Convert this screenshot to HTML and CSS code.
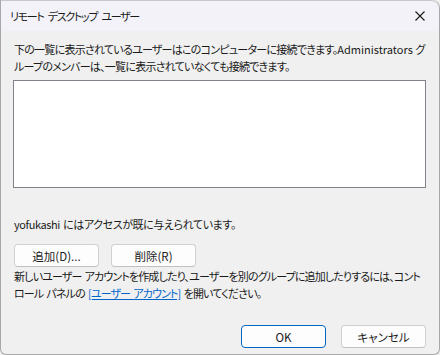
FILE: index.html
```html
<!DOCTYPE html>
<html lang="ja">
<head>
    <meta charset="UTF-8">
    <title>リモート デスクトップ ユーザー</title>
    <link rel="stylesheet" href="styles.css">
</head>
<body>
    <div class="window">
        <div class="titlebar">
            <span class="title">リモート デスクトップ ユーザー</span>
            <span class="close">
                <svg width="10" height="10" viewBox="0 0 10 10"><path d="M0.5 0.5 L9.5 9.5 M9.5 0.5 L0.5 9.5" stroke="#1a1a1a" stroke-width="1.1"/></svg>
            </span>
        </div>
        <div class="content">
            <p class="desc">下の一覧に表示されているユーザーはこのコンピューターに接続できます。<span class="latin">Administrators</span> グ<br>ループのメンバーは、一覧に表示されていなくても接続できます。</p>
            <div class="listbox"></div>
            <p class="status">yofukashi にはアクセスが既に与えられています。</p>
            <div class="row-buttons">
                <button class="btn">追加(D)...</button>
                <button class="btn">削除(R)</button>
            </div>
            <p class="hint">新しいユーザー アカウントを作成したり、ユーザーを別のグループに追加したりするには、コント<br>ロール パネルの <a href="#" class="link">[ユーザー アカウント]</a> を開いてください。</p>
        </div>
        <div class="footer">
            <button class="btn primary">OK</button>
            <button class="btn">キャンセル</button>
        </div>
    </div>
</body>
</html>
```

FILE: styles.css
```css
* {
    margin: 0;
    padding: 0;
    box-sizing: border-box;
}

body {
    font-family: "Noto Sans CJK JP", "Noto Sans", sans-serif;
    font-size: 11px;
    color: #1a1a1a;
    background: #f0f0f0;
    width: 440px;
    height: 355px;
    overflow: hidden;
}

.window {
    width: 440px;
    height: 355px;
    background: #f0f0f0;
    border: 1px solid #a8a8a8;
    border-top: none;
    border-radius: 0 8px 6px 6px;
    overflow: hidden;
}

.titlebar {
    height: 31px;
    background: #f2f2f8;
    display: flex;
    align-items: center;
    justify-content: space-between;
    padding: 0 8px 0 9px;
    border-top: 1px solid #c8c8cc;
    border-top-right-radius: 8px;
}

.title {
    font-size: 11px;
    font-feature-settings: "palt";
    letter-spacing: -1.3px;
    word-spacing: 3px;
    color: #1a1a1a;
}

.close {
    width: 22px;
    display: flex;
    justify-content: center;
}

.content {
    padding: 10px 13px 0 12px;
}

.desc,
.status,
.hint {
    line-height: 17px;
    font-feature-settings: "palt";
    white-space: nowrap;
    padding-left: 1px;
    word-spacing: 1px;
}

.desc {
    letter-spacing: -0.75px;
}

.latin {
    letter-spacing: 0;
}

.listbox {
    margin-top: 5px;
    height: 108px;
    background: #fff;
    border: 1px solid #82828a;
}

.status {
    margin-top: 28px;
    letter-spacing: -0.4px;
}

.row-buttons {
    margin-top: 11px;
    display: flex;
    gap: 12px;
    padding-left: 1px;
}

.btn {
    width: 85px;
    height: 23px;
    font-family: inherit;
    font-size: 11.5px;
    color: #1a1a1a;
    background: #fdfdfd;
    border: 1px solid #d0d0d0;
    border-bottom-color: #c0c0c0;
    border-radius: 4px;
    font-feature-settings: "palt";
}

.hint {
    margin-top: 1px;
    letter-spacing: -0.85px;
    word-spacing: 1.5px;
}

.link {
    color: #0066cc;
}

.footer {
    margin-top: 23px;
    display: flex;
    justify-content: flex-end;
    gap: 15px;
    padding-right: 13px;
}

.primary {
    border: 1px solid #0067c0;
    box-shadow: inset 0 0 0 1px #fdfdfd;
}
```
